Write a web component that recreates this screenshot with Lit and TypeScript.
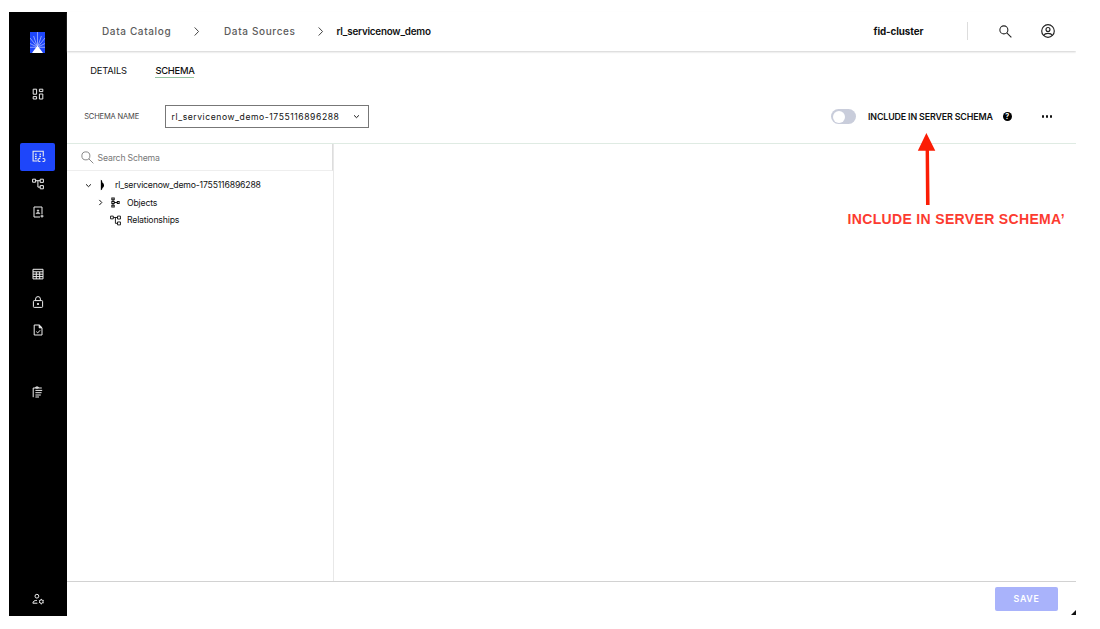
import { LitElement, html, css, svg } from "lit";
import { customElement, property } from "lit/decorators.js";

const icons: Record<string, unknown> = {
  dashboard: svg`<path d="M1.2 1.2h3.4v5H1.2zM7.4 1.2h3.4v2.4H7.4zM7.4 6h3.4v5H7.4zM1.2 8.6h3.4V11H1.2z"/>`,
  catalog: svg`<path d="M5 10.2H1V1.2h9.4V6"/><path d="M3.6 3.2v1.5M7.6 3.2v1.5M2.8 6h1.5M6.8 6h1.5M2.8 8h1.5" stroke-width="1.2"/><path d="M7.7 7.8H6.9a1.4 1.4 0 0 0 0 2.8h.9M9.8 7.8h.8a1.4 1.4 0 0 1 0 2.8h-.9"/>`,
  relations: svg`<path d="M.6 1.2h3v3h-3zM8.2 1.2h3.2v3.2H8.2zM8.2 7.6h3.2v3.2H8.2zM3.6 2.7h4.6M5.9 2.7v6.4h2.3"/>`,
  contact: svg`<path d="M8 11H2V1h8v7"/><path d="M4 7.6c.2-1.6 3.8-1.6 4 0z" fill="currentColor" stroke-width=".5"/><circle cx="6" cy="4.6" r=".8" fill="currentColor" stroke-width=".5"/><path d="M10 8.6v3M8.5 10.1h3"/>`,
  table: svg`<path d="M1 1.3h10v9.6H1zM1 3.8h10M1 6.2h10M1 8.6h10M4.3 4v7M7.7 4v7"/>`,
  lock: svg`<rect x="1.4" y="4.6" width="9.2" height="6.8" rx=".8"/><path d="M3.6 4.6V3a2.4 2.4 0 0 1 4.8 0v1.6"/><circle cx="6" cy="8" r=".7" fill="currentColor"/>`,
  filecheck: svg`<path d="M2.2 1h5l2.8 2.8V11H2.2z"/><path d="M7.2 1v2.8H10z" fill="currentColor"/><path d="M4.3 7.6l1.4 1.3 2.5-2.7"/>`,
  report: svg`<path d="M1.2 11.2V2h8.6M3.8 1h2.4v1H3.8zM3.4 4.4h6.8M3.4 6.7h6.2M3.4 9h5.4M3.4 11h3.6"/>`,
  usergear: svg`<circle cx="4.9" cy="3.2" r="1.9"/><path d="M5.4 10.2H.9c0-2 1.6-2.8 4-2.8"/><circle cx="9.3" cy="8.6" r="1.8"/><path d="M9.3 5.9v1M9.3 10.4v1M6.9 7.3l.8.5M10.9 9.4l.8.5M11.7 7.3l-.8.5M7.7 9.4l-.8.5"/>`,
  search: svg`<circle cx="4.5" cy="4.5" r="3.7"/><path d="M7.2 7.2l4.2 4.2"/>`,
  user: svg`<circle cx="6" cy="6" r="5.4"/><circle cx="6" cy="4.7" r="1.7"/><path d="M2.3 9.8c1.2-2.3 6.2-2.3 7.4 0"/>`,
  right: svg`<path d="M4 1.6l4.2 4.4L4 10.4"/>`,
  down: svg`<path d="M1.8 4l4.2 4 4.2-4"/>`,
  objects: svg`<path d="M2 1h2.6v2H2zM2 5h2.6v2H2zM2 9h2.6v2H2zM3.3 3v2M3.3 7v2M4.8 6h3M8 5h2v2H8z" stroke-width="1.1"/>`,
  database: svg`<path d="M4.2.4Q5.8.6 5.9 3.2Q7.8 4 7.7 6.6Q7.6 8.8 6 9.2Q5.9 11.4 4.2 11.8z" fill="currentColor" stroke="none"/>`,
};

@customElement("ui-icon")
export class UiIcon extends LitElement {
  @property() name = "";
  static styles = css`
    :host { display: block; flex: none; width: 12px; height: 12px; }
    svg { display: block; width: 100%; height: 100%; fill: none; stroke: currentColor; stroke-width: var(--stroke, 1); overflow: visible; }
  `;
  render() {
    return html`<svg viewBox="0 0 12 12">${icons[this.name]}</svg>`;
  }
}

@customElement("side-nav")
export class SideNav extends LitElement {
  static styles = css`
    :host { display: flex; flex-direction: column; align-items: center; box-sizing: border-box; width: 58px; background: #000; color: #eee; padding: 20.5px 0 3px; }
    .logo { display: block; width: 15px; height: 21px; margin-bottom: 27.5px; flex: none; }
    .group { display: flex; flex-direction: column; margin-bottom: 34.7px; }
    .item { display: flex; align-items: center; justify-content: center; width: 35px; height: 27.7px; border-radius: 2px; }
    .active { background: #1e46fa; }
    .active ui-icon { width: 13px; height: 13px; margin-left: 2px; }
    .last { margin: auto 0 0; }
  `;
  groups = [["dashboard"], ["catalog", "relations", "contact"], ["table", "lock", "filecheck"], ["report"]];
  render() {
    return html`
      <svg class="logo" viewBox="0 0 15 21">
        <path d="M0 0h15v21H0z" fill="#1e46fa" />
        <path d="M7.5 0v14M0 6l6.5 8M15 6l-6.5 8M3.6 4l3.4 10M11.4 4L8 14M0 11.5l6 3M15 11.5l-6 3M0 15.3h15" stroke="#b9c6ff" stroke-width=".7" fill="none" />
        <path d="M7.5 13.4L13 21H2z" fill="#fff" />
      </svg>
      ${this.groups.map((g) => html`<div class="group">${g.map((n) => html`<div class="item ${n === "catalog" ? "active" : ""}"><ui-icon name=${n}></ui-icon></div>`)}</div>`)}
      <div class="item last"><ui-icon name="usergear"></ui-icon></div>
    `;
  }
}

@customElement("app-root")
export class AppRoot extends LitElement {
  static styles = css`
    :host { display: block; position: relative; box-sizing: border-box; width: 1100px; height: 629px; padding: 11.5px 24px 13.5px 8.6px; background: #fff; overflow: hidden; font-family: Inter, "Liberation Sans", sans-serif; color: #111; white-space: nowrap; }
    .frame { display: flex; height: 604px; }
    .main { flex: 1; min-width: 0; display: flex; flex-direction: column; }
    .bar { display: flex; align-items: center; flex: none; box-sizing: border-box; }
    .header { height: 39.5px; padding-left: 35.4px; box-shadow: 0 1px 2px #d0d0d0; clip-path: inset(0 0 -6px 0); }
    .crumb { width: 69px; font-size: 10px; font-weight: 500; letter-spacing: .64px; color: #5c5c5c; }
    .crumb.second { width: 71px; }
    .sep { width: 11px; height: 11px; margin: 0 20.5px; color: #333; }
    .sep.first { margin-right: 21.5px; }
    .current { margin-left: -10.5px; font-size: 9.8px; font-weight: 600; letter-spacing: -.19px; }
    .cluster { margin-left: auto; width: 93px; font-size: 9.8px; font-weight: 700; letter-spacing: -.08px; }
    .tools { display: flex; align-items: center; height: 18px; border-left: 1px solid #ddd; padding: 0 21px 0 31.5px; color: #222; }
    .tools ui-icon { width: 13px; height: 13px; }
    .tools ui-icon + ui-icon { width: 14px; height: 14px; margin-left: 29px; }
    .tabs { height: 39px; padding-left: 23.6px; font-size: 9.4px; }
    .tab { width: 65.2px; letter-spacing: -.19px; }
    .selected { width: 39px; font-weight: 500; letter-spacing: -.25px; border-bottom: 1px solid #94c4a2; padding: 2px 0 1px; }
    .toolbar { height: 54px; padding: 0 23px 0 17.6px; border-bottom: 1px solid #dfebe3; }
    .label { width: 80.8px; font-size: 7.5px; color: #444; letter-spacing: -.15px; }
    .select { display: flex; align-items: center; justify-content: space-between; box-sizing: border-box; width: 204px; height: 23px; border: 1px solid #777; padding: 0 8px 0 5.6px; font-size: 8.6px; letter-spacing: .56px; }
    .select ui-icon { width: 7px; height: 7px; --stroke: 1.7; }
    .toggle { box-sizing: border-box; width: 25px; height: 15px; margin-left: auto; padding: 1.5px; border-radius: 8px; background: #c9cddb; }
    .knob { width: 12px; height: 12px; border-radius: 50%; background: #fff; }
    .include { width: 134.5px; margin-left: 12px; font-size: 8.9px; font-weight: 600; letter-spacing: -.15px; }
    .help { width: 9.5px; height: 9.5px; border-radius: 50%; background: #000; color: #fff; font-size: 7px; line-height: 9.5px; font-weight: 700; text-align: center; }
    .dots { display: flex; gap: 2px; margin-left: 29.5px; padding-right: .6px; }
    .dot { width: 2.3px; height: 2.3px; border-radius: 50%; background: #111; }
    .body { flex: 1; min-height: 0; display: flex; }
    .tree { box-sizing: border-box; width: 267.4px; border-right: 1px solid #e8e8e8; font-size: 8.7px; letter-spacing: -.18px; }
    .search { height: 27px; padding: 1.5px 0 0 14px; color: #777; border-bottom: 1px solid #eee; border-right: 1px solid #ddd; gap: 4px; }
    .search ui-icon { width: 13px; height: 13px; --stroke: .8; }
    .node { display: flex; align-items: center; height: 17.5px; }
    .root { margin-top: 5.5px; padding-left: 18.4px; }
    .root .db { width: 11px; height: 12px; margin-left: 5px; margin-right: 7px; color: #000; }
    .child { padding-left: 30px; }
    .leaf { padding-left: 43px; }
    .chev { width: 7px; height: 7px; --stroke: 1.7; }
    .node .kind { width: 11px; height: 11px; margin: 0 6.4px 0 6px; }
    .node.leaf .kind { margin-left: 0; }
    .footer { height: 34.5px; border-top: 1px solid #d2d2d2; justify-content: flex-end; padding-right: 18px; }
    .save { width: 63px; height: 24px; border-radius: 2px; background: #a9b3fb; color: #fff; font-size: 8.8px; font-weight: 600; letter-spacing: .7px; line-height: 24px; text-align: center; }
    .corner { position: absolute; left: 1071px; top: 610px; width: 5px; height: 5px; background: #111; clip-path: polygon(100% 0, 100% 100%, 0 100%); }
    .arrow { position: absolute; left: 916px; top: 132px; width: 22px; height: 74px; }
    .note { position: absolute; left: 847.5px; top: 210px; font: 700 14px/18px "Liberation Sans", Arial, sans-serif; color: #fc3b30; letter-spacing: .34px; }
  `;
  render() {
    return html`
      <div class="frame">
        <side-nav></side-nav>
        <div class="main">
          <div class="bar header">
            <span class="crumb">Data Catalog</span><ui-icon class="sep first" name="right"></ui-icon>
            <span class="crumb second">Data Sources</span><ui-icon class="sep" name="right"></ui-icon>
            <span class="current">rl_servicenow_demo</span>
            <span class="cluster">fid-cluster</span>
            <div class="tools"><ui-icon name="search"></ui-icon><ui-icon name="user"></ui-icon></div>
          </div>
          <div class="bar tabs"><span class="tab">DETAILS</span><span class="tab selected">SCHEMA</span></div>
          <div class="bar toolbar">
            <span class="label">SCHEMA NAME</span>
            <div class="select"><span>rl_servicenow_demo-1755116896288</span><ui-icon name="down"></ui-icon></div>
            <div class="toggle"><div class="knob"></div></div>
            <span class="include">INCLUDE IN SERVER SCHEMA</span>
            <span class="help">?</span>
            <div class="dots"><i class="dot"></i><i class="dot"></i><i class="dot"></i></div>
          </div>
          <div class="body">
            <div class="tree">
              <div class="bar search"><ui-icon name="search"></ui-icon><span>Search Schema</span></div>
              <div class="node root"><ui-icon class="chev" name="down"></ui-icon><ui-icon class="db" name="database"></ui-icon>rl_servicenow_demo-1755116896288</div>
              <div class="node child"><ui-icon class="chev" name="right"></ui-icon><ui-icon class="kind" name="objects"></ui-icon>Objects</div>
              <div class="node leaf"><ui-icon class="kind" name="relations"></ui-icon>Relationships</div>
            </div>
          </div>
          <div class="bar footer"><div class="save">SAVE</div></div>
        </div>
      </div>
      <div class="corner"></div>
      <svg class="arrow" viewBox="0 0 22 74"><path d="M10.4 1L19.3 18.8H13l.6 54.2H10l-.4-54.2H1.8z" fill="#fb1d05" /></svg>
      <div class="note">INCLUDE IN SERVER SCHEMA’</div>
    `;
  }
}
